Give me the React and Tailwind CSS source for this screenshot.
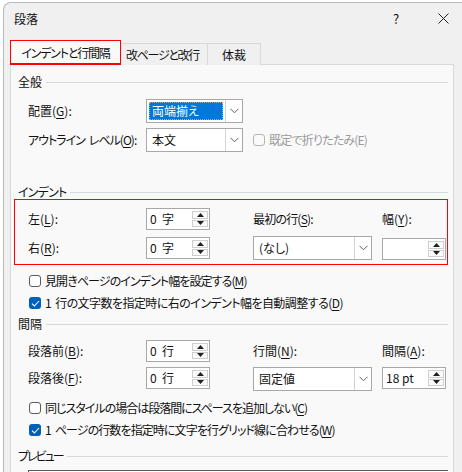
import React from "react";

const U = ({ children }) => (
  <span className="underline underline-offset-[2px] decoration-[1px]">{children}</span>
);

const Sp = () => <span className="inline-block w-[4px]" />;

const Chevron = () => (
  <svg width="9" height="6" viewBox="0 0 9 6">
    <path d="M0.5 0.8 L4.5 4.8 L8.5 0.8" fill="none" stroke="#606060" strokeWidth="1" />
  </svg>
);

function Select({ w, children, highlight }) {
  return (
    <div
      className="flex h-[24px] border border-[#a8a8a8] bg-white"
      style={{ width: w }}
    >
      <div className="flex flex-1 items-center p-[2px]">
        {highlight ? (
          <div className="flex h-full w-full items-center border border-dotted border-[#d9a35c] bg-[#0078d7] pl-[2px] text-white">
            {children}
          </div>
        ) : (
          <span className="pl-[3px]">{children}</span>
        )}
      </div>
      <div className="flex w-[17px] items-center justify-center border-l border-[#d4d4d4]">
        <Chevron />
      </div>
    </div>
  );
}

function Spin({ children }) {
  return (
    <div className="flex h-[22px] w-[64px] border border-[#a8a8a8] bg-white">
      <div className="flex flex-1 items-center whitespace-pre pl-[3px]">{children}</div>
      <div className="flex w-[17px] flex-col gap-[1px] py-[2px] pr-[1px]">
        <div className="flex flex-1 items-center justify-center border border-[#cfcfcf] bg-[#fbfbfb]">
          <svg width="7" height="4" viewBox="0 0 7 4">
            <path d="M0 4 L3.5 0 L7 4 Z" fill="#202020" />
          </svg>
        </div>
        <div className="flex flex-1 items-center justify-center border border-[#cfcfcf] bg-[#fbfbfb]">
          <svg width="7" height="4" viewBox="0 0 7 4">
            <path d="M0 0 L3.5 4 L7 0 Z" fill="#202020" />
          </svg>
        </div>
      </div>
    </div>
  );
}

function Check({ checked, disabled, children, tr = "" }) {
  return (
    <div className="flex h-[18px] items-center pl-[11px]">
      <div
        className={
          "flex h-[12px] w-[12px] shrink-0 items-center justify-center rounded-[3px] " +
          (checked
            ? "bg-[#005fb8]"
            : disabled
            ? "border border-[#b5b5b5] bg-[#f9f9f9]"
            : "border border-[#5c5c5c] bg-white")
        }
      >
        {checked && (
          <svg width="9" height="7" viewBox="0 0 9 7">
            <path d="M1 3.6 L3.4 6 L8 1" fill="none" stroke="#fff" strokeWidth="1.1" />
          </svg>
        )}
      </div>
      <span className={"ml-[4px] whitespace-pre " + tr + (disabled ? " text-[#9a9a9a]" : "")}>
        {children}
      </span>
    </div>
  );
}

function Heading({ children, className = "", tr = "" }) {
  return (
    <div className={"flex h-[20px] items-center " + className}>
      <span className={tr}>{children}</span>
      <div className="ml-[4px] mt-[1px] h-px flex-1 bg-[#d9d9d9]" />
    </div>
  );
}

export default function App() {
  return (
    <div className="h-[472px] w-[462px] overflow-hidden bg-white font-['Noto_Sans_CJK_JP','Noto_Sans',sans-serif] text-[12px] leading-none text-[#111] [font-feature-settings:'palt']">
      <div className="ml-[3px] mt-[2px] h-[480px] w-[466px] rounded-t-[8px] border-l border-t border-[#b9b9b9] bg-[#f0f0f0]">
        {/* title bar */}
        <div className="flex h-[37px] items-center">
          <span className="ml-[10px] mt-[-6px]">段落</span>
          <span className="ml-auto mt-[-6px] w-[10px] text-[13px]">?</span>
          <div className="ml-[35px] mr-[20px] mt-[-6px]">
            <svg width="11" height="11" viewBox="0 0 11 11">
              <path d="M0.5 0.5 L10.5 10.5 M10.5 0.5 L0.5 10.5" stroke="#222" strokeWidth="1" />
            </svg>
          </div>
        </div>
        {/* tabs */}
        <div className="ml-[6px] flex h-[25px] items-end">
          <div className="relative z-10 flex h-[25px] w-[111px] items-center justify-center border-x-[1.5px] border-b-[2px] border-t-[1.5px] border-[#ff0000] bg-[#f9f9f9]">
            <span className="mt-[1px] whitespace-nowrap tracking-[-1.2px]">インデントと行間隔</span>
          </div>
          <div className="flex h-[22px] w-[87px] items-center justify-center border-r border-t border-[#d9d9d9] bg-[#f0f0f0]">
            <span className="mr-[3px] whitespace-nowrap tracking-[-1.3px]">改ページと改行</span>
          </div>
          <div className="flex h-[22px] w-[53px] items-center justify-center border-r border-t border-[#d9d9d9] bg-[#f0f0f0]">
            体裁
          </div>
        </div>
        {/* panel */}
        <div className="ml-[6px] mt-[-1px] w-[444px] border border-[#d9d9d9] bg-[#f9f9f9] pb-[20px] pl-[7px] pr-[5px] pt-[7px]">
          <Heading>全般</Heading>
          <div className="mt-[7px] flex h-[24px] items-center pl-[10px]">
            <span className="w-[118px]">
              配置(<U>G</U>):
            </span>
            <Select w={97} highlight>
              両端揃え
            </Select>
          </div>
          <div className="mt-[5px] flex h-[24px] items-center pl-[10px]">
            <span className="w-[118px] whitespace-pre tracking-[-1px]">
              アウトライン<Sp />レベル(<U>O</U>):
            </span>
            <Select w={97}>本文</Select>
            <div className="ml-[-1px]">
              <Check disabled tr="tracking-[-0.8px]">既定で折りたたみ(E)</Check>
            </div>
          </div>

          <Heading className="mt-[30px]" tr="tracking-[-0.8px]">インデント</Heading>
          <div className="relative flex flex-col pl-[10px] pt-[6px]">
            <div className="pointer-events-none absolute left-[-4px] right-[0px] top-[-3px] h-[66px] border-[1.5px] border-[#ff0000]" />
            <div className="flex h-[22px] items-center">
              <span className="w-[118px]">
                左(<U>L</U>):
              </span>
              <Spin>0  字</Spin>
              <span className="ml-[43px] w-[129px] tracking-[-0.8px]">
                最初の行(<U>S</U>):
              </span>
              <span>
                幅(<U>Y</U>):
              </span>
            </div>
            <div className="mt-[6px] flex h-[24px] items-center">
              <span className="w-[118px]">
                右(<U>R</U>):
              </span>
              <Spin>0  字</Spin>
              <div className="ml-[43px] w-[129px]">
                <Select w={119}>(なし)</Select>
              </div>
              <div className="mt-[2px]">
                <Spin></Spin>
              </div>
            </div>
          </div>

          <div className="mt-[12px]">
            <Check tr="tracking-[-0.9px]">
              見開きページのインデント幅を設定する(<U>M</U>)
            </Check>
          </div>
          <div className="mt-[4px]">
            <Check checked tr="tracking-[-0.55px]">
              1<Sp />行の文字数を指定時に右のインデント幅を自動調整する(<U>D</U>)
            </Check>
          </div>

          <Heading className="mt-[2px]">間隔</Heading>
          <div className="flex flex-col pl-[10px] pt-[6px]">
            <div className="flex h-[22px] items-center">
              <span className="w-[118px]">
                段落前(<U>B</U>):
              </span>
              <Spin>0  行</Spin>
              <span className="ml-[43px] w-[129px]">
                行間(<U>N</U>):
              </span>
              <span>
                間隔(<U>A</U>):
              </span>
            </div>
            <div className="mt-[5px] flex h-[24px] items-start">
              <span className="flex h-[22px] w-[118px] items-center">
                段落後(<U>F</U>):
              </span>
              <Spin>0  行</Spin>
              <div className="ml-[43px] w-[129px]">
                <Select w={119}>固定値</Select>
              </div>
              <Spin>18 pt</Spin>
            </div>
          </div>

          <div className="mt-[8px]">
            <Check tr="tracking-[-1px]">
              同じスタイルの場合は段落間にスペースを追加しない(<U>C</U>)
            </Check>
          </div>
          <div className="mt-[4px]">
            <Check checked tr="tracking-[-0.9px]">
              1<Sp />ページの行数を指定時に文字を行グリッド線に合わせる(<U>W</U>)
            </Check>
          </div>

          <Heading className="mt-[7px]" tr="tracking-[-2px]">プレビュー</Heading>
          <div className="ml-[10px] mt-[4px] h-[40px] border-l border-t border-[#5a5a5a] bg-white" />
        </div>
      </div>
    </div>
  );
}
